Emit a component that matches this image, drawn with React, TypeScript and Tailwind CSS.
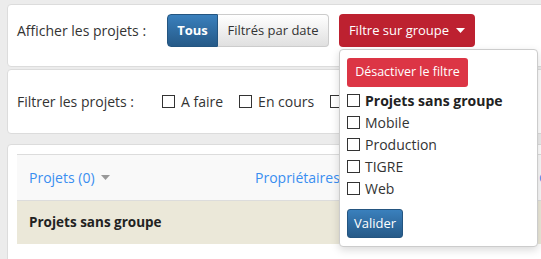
function Box() {
  return <span className="inline-block h-[13px] w-[13px] shrink-0 border border-[#333] bg-white" />
}

function Caret({ color }: { color: string }) {
  return (
    <svg width="9" height="5" viewBox="0 0 9 5" className="inline-block">
      <path d="M0 0h9L4.5 5z" fill={color} />
    </svg>
  )
}

const groupes = ['Mobile', 'Production', 'TIGRE', 'Web']

export default function App() {
  return (
    <div
      className="h-[259px] w-full overflow-hidden bg-[#ececec] pl-[7px] pt-[4px] text-[14px] text-[#333]"
      style={{ fontFamily: '"Open Sans", "Noto Sans", sans-serif' }}
    >
      {/* panneau affichage */}
      <div className="relative z-10 flex h-[63px] w-[600px] items-start rounded-[4px] border border-[#dcdcdc] bg-white pl-[9px] pt-[9px]">
        <span className="mt-[8px] w-[150px] leading-[18px]">Afficher les projets :</span>
        <div className="flex">
          <button className="h-[33px] w-[51px] rounded-l-[4px] border border-[#245580] bg-linear-to-b from-[#3a80bd] to-[#265a88] text-[13px] font-bold text-white">
            Tous
          </button>
          <button className="h-[33px] w-[111px] rounded-r-[4px] border border-l-0 border-[#ccc] bg-linear-to-b from-white to-[#e0e0e0] text-[13px] text-[#333]">
            Filtrés par date
          </button>
        </div>
        <div className="relative ml-[10px]">
          <button className="flex h-[33px] w-[136px] items-center justify-center gap-[7px] rounded-[4px] bg-[#bd2130] text-[13px] text-white">
            Filtre sur groupe <Caret color="#fff" />
          </button>
          <div className="absolute left-0 top-[35px] w-[199px] rounded-[4px] border border-[#ccc] bg-white px-[7px] pb-[8px] pt-[8px] shadow-[0_3px_8px_rgba(0,0,0,0.15)]">
            <button className="h-[29px] w-[121px] rounded-[3px] bg-[#dc3545] text-[12.5px] text-white">
              Désactiver le filtre
            </button>
            <div className="mt-[2px] flex flex-col">
              <label className="flex h-[22px] items-center gap-[5px] font-bold text-[#222]">
                <Box /> Projets sans groupe
              </label>
              {groupes.map((g) => (
                <label key={g} className="flex h-[22px] items-center gap-[5px]">
                  <Box /> {g}
                </label>
              ))}
            </div>
            <button className="mt-[10px] h-[29px] w-[56px] rounded-[3px] border border-[#245580] bg-linear-to-b from-[#3a80bd] to-[#265a88] text-[13px] text-white">
              Valider
            </button>
          </div>
        </div>
      </div>

      {/* panneau filtre statut */}
      <div className="mt-[2px] flex h-[65px] w-[600px] items-center rounded-[4px] border border-[#dcdcdc] bg-white pl-[9px]">
        <span className="w-[145px]">Filtrer les projets :</span>
        <label className="flex items-center gap-[6px]">
          <Box /> A faire
        </label>
        <label className="ml-[16px] flex items-center gap-[6px]">
          <Box /> En cours
        </label>
        <label className="ml-[16px] flex items-center gap-[6px]">
          <Box />
        </label>
      </div>

      {/* tableau */}
      <div className="mt-[10px] h-[140px] w-[600px] rounded-[4px] border border-[#dcdcdc] bg-white pl-[9px] pt-[9px]">
        <div className="border-t border-[#dcdcdc]">
          <div className="flex h-[46px] items-center border-b border-[#dcdcdc] bg-[#f9f9f9] pl-[12px] text-[#3a8ef0]">
            <span className="flex w-[226px] items-center gap-[6px]">
              Projets (0) <Caret color="#999" />
            </span>
            <span className="w-[284px]">Propriétaires</span>
            <span>Groupe</span>
          </div>
          <div className="flex h-[43px] items-center bg-[#ebe8d9] pl-[12px] text-[13.5px] font-bold text-[#222]">
            Projets sans groupe
          </div>
        </div>
      </div>
    </div>
  )
}
